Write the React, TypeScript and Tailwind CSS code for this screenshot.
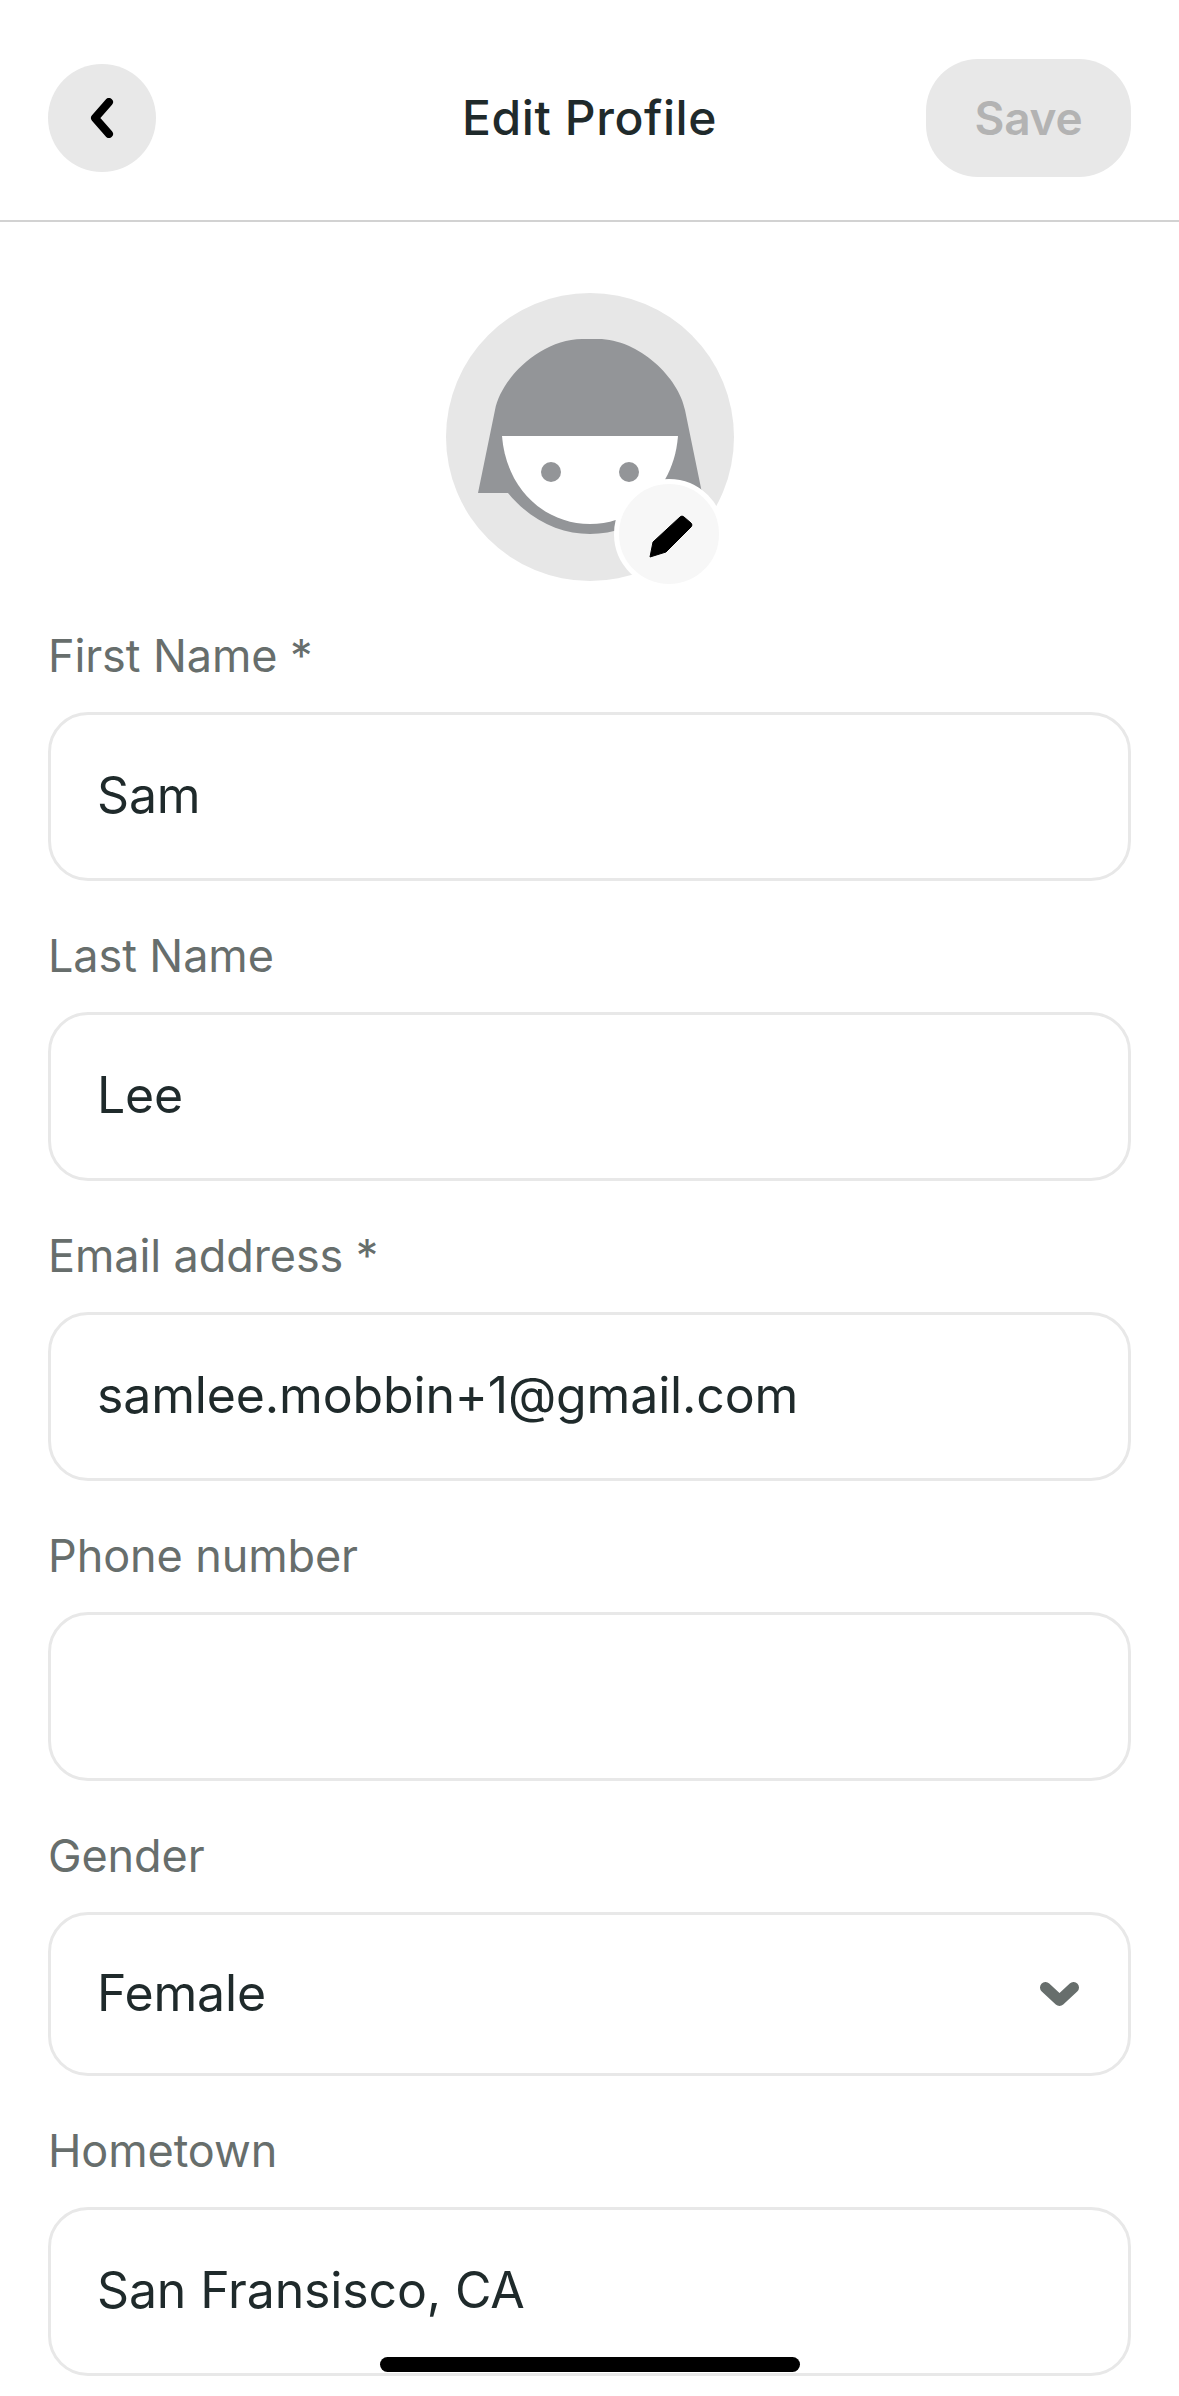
const font = "font-['Inter','Liberation_Sans',sans-serif]";

function Field({ label, value, select }: { label: string; value?: string; select?: boolean }) {
  return (
    <div className="mt-[45px]">
      <div className="mb-[26px] h-[60px] text-[45px] leading-[60px] tracking-[-0.1px] text-[#676e6c]">{label}</div>
      <div className={`${select ? "h-[164px]" : "h-[169px]"} flex items-center justify-between rounded-[40px] border-[3px] border-[#e8e8e8] bg-white pl-[46px] pr-[49px] text-[50px] tracking-[-0.15px] text-[#1f2a2b]`}>
        <span className="-translate-y-[1px]">{value}</span>
        {select && (
          <svg width="39" height="24" viewBox="0 0 39 24" fill="none" stroke="#676e6c" strokeWidth="11" strokeLinecap="round" strokeLinejoin="round">
            <path d="M5.5 5.5 19.5 18.5 33.5 5.5" />
          </svg>
        )}
      </div>
    </div>
  );
}

export default function App() {
  return (
    <div className={`relative h-[2396px] w-[1179px] overflow-hidden bg-white ${font}`}>
      <header className="grid h-[222px] grid-cols-[205px_1fr_205px] items-center border-b-2 border-[#d2d2d2] px-[48px] pt-[16px]">
        <button className="flex h-[108px] w-[108px] items-center justify-center rounded-full bg-[#e8e8e8]">
          <svg width="24" height="40" viewBox="0 0 24 40" fill="none" stroke="#000" strokeWidth="8" strokeLinecap="round" strokeLinejoin="round" className="-ml-[1px]">
            <path d="M19 4 5 20 19 36" />
          </svg>
        </button>
        <h1 className="text-center text-[48px] font-medium tracking-[0.6px] text-[#1f2a2b]">Edit Profile</h1>
        <button className="flex h-[118px] w-[205px] items-center justify-center rounded-[52px] bg-[#e8e8e8] text-[46px] font-semibold tracking-[-0.2px] text-[#b3b3b3]">Save</button>
      </header>

      <main className="px-[48px]">
        <div className="relative mx-auto mt-[71px] h-[288px] w-[288px]">
          <svg width="288" height="288" viewBox="0 0 288 288" className="block">
            <circle cx="144" cy="144" r="144" fill="#e7e7e7" />
            <path d="M32 200 49 117C55 85 95 46 136 46H152C193 46 233 85 239 117L256 200H62C85 228 115 241 144 241S203 228 226 200Z" fill="#939598" />
            <path d="M56 143H232C228 195 190 231 144 231S60 195 56 143Z" fill="#fff" />
            <circle cx="105" cy="179" r="10" fill="#939598" />
            <circle cx="183" cy="179" r="10" fill="#939598" />
          </svg>
          <div className="absolute left-[168px] top-[186px] h-[110px] w-[110px] rounded-full border-[5px] border-white bg-[#f7f7f7]">
            <svg width="100" height="100" viewBox="5 5 100 100" className="block">
              <path d="M36 78 39 63 66 38Q68 36 70 38L77 44Q79 46 77 48L52 73Z" fill="#000" stroke="#000" strokeWidth="1" strokeLinejoin="round" />
            </svg>
          </div>
        </div>

        <Field label="First Name *" value="Sam" />
        <Field label="Last Name" value="Lee" />
        <Field label="Email address *" value="samlee.mobbin+1@gmail.com" />
        <Field label="Phone number" />
        <Field label="Gender" value="Female" select />
        <Field label="Hometown" value="San Fransisco, CA" />
      </main>

      <div className="absolute bottom-[24px] left-[380px] h-[15px] w-[420px] rounded-full bg-black" />
    </div>
  );
}
